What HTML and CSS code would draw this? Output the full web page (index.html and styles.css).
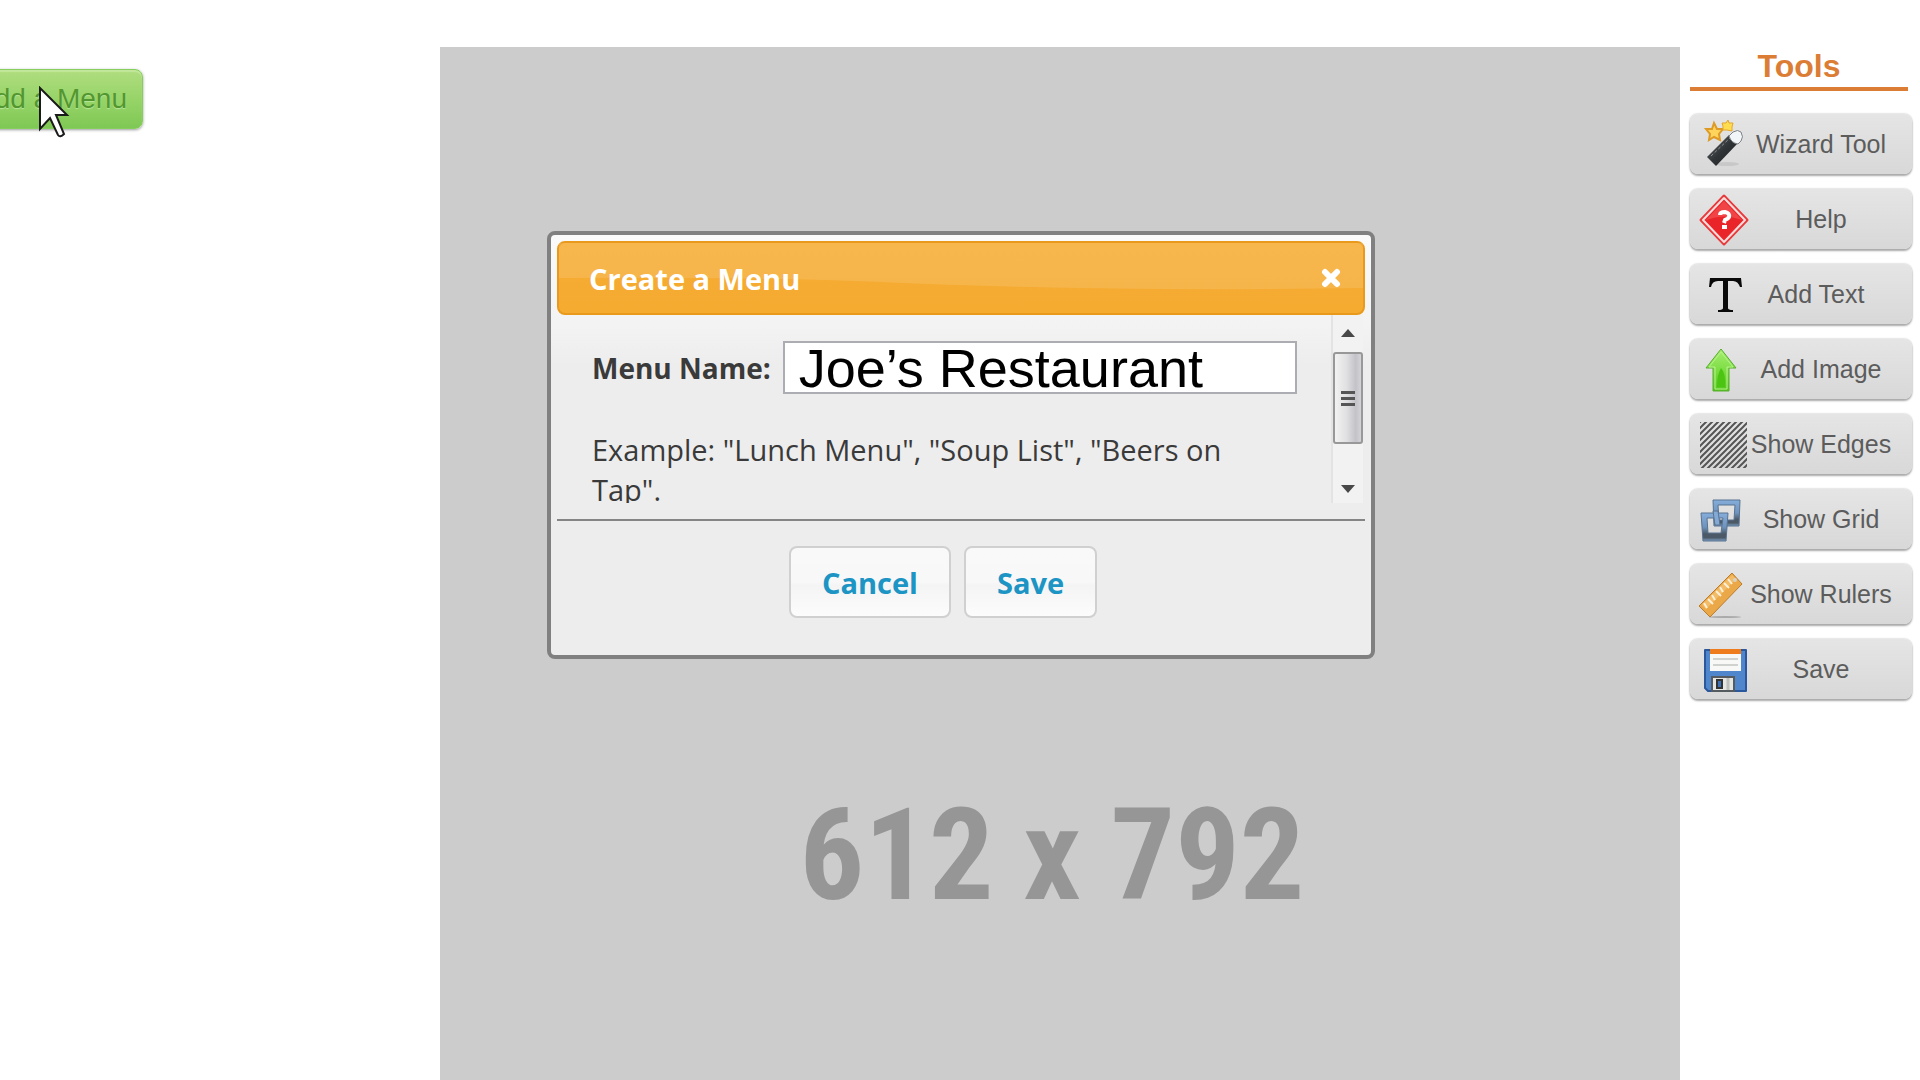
FILE: index.html
```html
<!DOCTYPE html>
<html lang="en">
<head>
<meta charset="utf-8">
<title>Menu Editor</title>
<link rel="stylesheet" href="styles.css">
</head>
<body>
<div class="page">
  <aside class="menus">
    <button class="add-menu" type="button">Add a Menu</button>
  </aside>

  <main class="workspace">
    <div class="sheet"><span class="sheet-size">612 x 792</span></div>
  </main>

  <aside class="tools">
    <h2 class="tools-title">Tools</h2>
    <button class="tool" type="button">
      <svg class="tool-icon" viewBox="0 0 52 60" aria-hidden="true">
        <defs>
          <linearGradient id="wand" x1="0" y1="0" x2="1" y2="1"><stop offset="0" stop-color="#6a6e70"/><stop offset=".5" stop-color="#303436"/><stop offset="1" stop-color="#1c1e20"/></linearGradient>
        </defs>
        <ellipse cx="37" cy="50" rx="12" ry="2" fill="#c8c8c8"/>
        <path d="M17 43 L39 21 L48 29 L26 52 Z" fill="url(#wand)"/>
        <path d="M21 42 L40 24" stroke="#8b8f90" stroke-width="1" stroke-dasharray="3 2"/>
        <path d="M39 22 L43 18 Q48 15 51 18 Q54 23 51 27 L48 30 Q41 29 39 22Z" fill="#f2f6f8" stroke="#7d8285" stroke-width="1"/>
        <path d="M24 9 L27 15 L33 15 L29 20 L30 26 L24 23 L19 26 L20 20 L16 15 L22 15Z" fill="#ffd45c" stroke="#dd9a24" stroke-width="2"/>
        <path d="M38 6 L39 9 L43 9 L42 13 L42 17 L37 16 L33 16 L33 12 L32 9 L36 9Z" fill="#ffdc50" stroke="#e5a62c" stroke-width="1"/>
      </svg>
      <span>Wizard Tool</span>
    </button>
    <button class="tool" type="button">
      <svg class="tool-icon" viewBox="0 0 52 60" aria-hidden="true">
        <path d="M34 7 L57 31 L34 55 L11 31Z" fill="#e8393b" stroke="#e8393b" stroke-width="3" stroke-linejoin="round"/>
        <path d="M34 9 L55 31 L34 53 L13 31Z" fill="#ea2529" stroke="#fbdcdc" stroke-width="2" stroke-linejoin="round"/>
        <path d="M34 12 L52 31 Q34 24 16 31Z" fill="#f35a5b" opacity=".6"/>
        <path d="M30 26 Q30 23 35 23 Q40 24 39 28 Q38 30 35 31 L34 34" fill="none" stroke="#fff" stroke-width="4"/>
        <rect x="32" y="36" width="5" height="4" fill="#fff"/>
      </svg>
      <span>Help</span>
    </button>
    <button class="tool tool-text" type="button">
      <svg class="tool-icon" viewBox="0 0 52 60" aria-hidden="true">
        <path d="M20 14 H51 L52 23 H50 Q48 17 43 17 H38 V44 Q38 46 43 46 V48 H28 V46 Q33 46 33 44 V17 H28 Q22 17 21 23 H19Z" fill="#0a0a0a"/>
      </svg>
      <span>Add Text</span>
    </button>
    <button class="tool" type="button">
      <svg class="tool-icon" viewBox="0 0 52 60" aria-hidden="true">
        <defs><linearGradient id="up" x1="0" y1="0" x2="0" y2="1"><stop offset="0" stop-color="#a6ee70"/><stop offset=".5" stop-color="#7ddd45"/><stop offset="1" stop-color="#52c61a"/></linearGradient></defs>
        <path d="M31 10 L46 29 H39 V52 H23 V29 H16Z" fill="url(#up)" stroke="#58ad2d" stroke-width="1" stroke-linejoin="round"/>
        <path d="M31 13 L43 28 H37 V50 H25 V28 H19Z" fill="none" stroke="#b9f38d" stroke-width="1"/>
        <path d="M31 29 Q36 34 35 48 H27 Q27 35 31 29Z" fill="#4cc512"/>
      </svg>
      <span>Add Image</span>
    </button>
    <button class="tool" type="button">
      <svg class="tool-icon" viewBox="0 0 52 60" aria-hidden="true">
        <defs><pattern id="hatch" width="6" height="6" patternUnits="userSpaceOnUse"><path d="M-1 7 L7 -1 M-1 1 L1 -1 M5 7 L7 5" stroke="#555" stroke-width="2"/></pattern></defs>
        <rect x="10" y="8" width="47" height="46" fill="url(#hatch)"/>
      </svg>
      <span>Show Edges</span>
    </button>
    <button class="tool" type="button">
      <svg class="tool-icon" viewBox="0 0 52 60" aria-hidden="true">
        <defs>
          <linearGradient id="sq" x1="0" y1="0" x2="0" y2="1"><stop offset="0" stop-color="#86aedb"/><stop offset=".5" stop-color="#6e93bd"/><stop offset=".75" stop-color="#4c5966"/><stop offset=".88" stop-color="#4c5966"/><stop offset="1" stop-color="#7e9fc2"/></linearGradient>
        </defs>
        <g fill-rule="evenodd" stroke="#587391" stroke-width="1">
          <path d="M23 11 H50 L49 37 H24Z M28 16 L29 31 H44 L45 16Z" fill="url(#sq)"/>
          <path d="M11 24 H38 L36 52 H13Z M17 29 L18 44 H31 L33 29Z" fill="url(#sq)"/>
          <path d="M23 22 H28 L30 36 H25Z" fill="#83a9d4"/>
        </g>
      </svg>
      <span>Show Grid</span>
    </button>
    <button class="tool" type="button">
      <svg class="tool-icon" viewBox="0 0 52 60" aria-hidden="true">
        <ellipse cx="35" cy="53" rx="16" ry="1" fill="#aaa"/>
        <path d="M42 9 L52 20 L20 53 L9 42Z" fill="#eba848" stroke="#bd7b28" stroke-width="1" stroke-linejoin="round"/>
        <path d="M12 41 L42 11 L46 15 L16 45Z" fill="#f3bc68"/>
        <path d="M14 39 l3 5 M18 35 l5 5 M22 31 l3 5 M26 27 l5 5 M30 23 l3 5 M34 19 l5 5 M38 15 l4 5" stroke="#fdf0d6" stroke-width="2"/>
        <circle cx="45" cy="16" r="2" fill="#d9d3c4"/>
      </svg>
      <span>Show Rulers</span>
    </button>
    <button class="tool" type="button">
      <svg class="tool-icon" viewBox="0 0 52 60" aria-hidden="true">
        <path d="M15 11 H56 V52 H18 L15 49Z" fill="#4f86cc" stroke="#2b579c" stroke-width="2" stroke-linejoin="round"/>
        <rect x="20" y="10" width="31" height="5" fill="#ee7c1c"/>
        <rect x="20" y="15" width="31" height="17" fill="#f8f8f6"/>
        <path d="M23 20 H48 M23 26 H48" stroke="#cfd2cf" stroke-width="2"/>
        <rect x="22" y="38" width="22" height="14" fill="#e6e6e2" stroke="#565b5f" stroke-width="2"/>
        <rect x="27" y="41" width="5" height="8" fill="#3d6fb5" stroke="#333" stroke-width="2"/>
        <path d="M38 39 V51" stroke="#bfc0bd" stroke-width="3"/>
      </svg>
      <span>Save</span>
    </button>
  </aside>
</div>

<div class="overlay">
  <section class="dialog" role="dialog" aria-labelledby="dialog-title">
    <header class="dialog-bar">
      <svg class="dialog-gloss" viewBox="0 0 800 70" preserveAspectRatio="none" aria-hidden="true"><path d="M0 0 H800 V45 Q540 49 320 39 Q200 34 0 35Z" fill="#fff" fill-opacity=".12"/></svg>
      <h1 class="dialog-title" id="dialog-title">Create a Menu</h1>
      <button class="close" type="button" aria-label="Close">
        <svg class="close-icon" viewBox="0 0 20 20" aria-hidden="true"><path d="M4 4 L16 16 M16 4 L4 16" stroke="#fff" stroke-width="6" stroke-linecap="round"/></svg>
      </button>
    </header>
    <div class="dialog-body">
      <div class="dialog-content">
        <div class="field">
          <label class="field-label" for="menu-name">Menu Name:</label>
          <input class="field-input" id="menu-name" type="text" value="Joe’s Restaurant">
        </div>
        <p class="example">Example: "Lunch Menu", "Soup List", "Beers on Tap".</p>
      </div>
      <div class="scrollbar" aria-hidden="true">
        <svg class="arrow" viewBox="0 0 14 8"><path d="M7 0 L14 8 H0Z" fill="#484848"/></svg>
        <div class="thumb"><i class="grip"></i><i class="grip"></i><i class="grip"></i></div>
        <svg class="arrow arrow-down" viewBox="0 0 14 8"><path d="M0 0 H14 L7 8Z" fill="#484848"/></svg>
      </div>
    </div>
    <footer class="dialog-actions">
      <button class="action" type="button">Cancel</button>
      <button class="action" type="button">Save</button>
    </footer>
  </section>
</div>

<svg class="cursor" viewBox="0 0 32 54" aria-hidden="true"><path d="M2 2 V43 L12 32 L20 49 Q22 52 26 48 L18 29 H29Z" fill="#fff" stroke="#1a1a1a" stroke-width="2"/></svg>
</body>
</html>
```

FILE: styles.css
```css
* { box-sizing: border-box; }

body {
  margin: 0;
  height: 100vh;
  overflow: hidden;
  position: relative;
  background: #fff;
  font-family: "Liberation Sans", Arial, sans-serif;
}

button { font-family: inherit; cursor: pointer; }

.page {
  display: grid;
  grid-template-columns: 440px 1fr 240px;
  align-items: start;
}

/* Left column */
.menus { padding-top: 69px; }

.add-menu {
  height: 60px;
  margin-left: -41px;
  padding: 0 15px 0 16px;
  border: 1px solid #86cf5c;
  border-radius: 8px;
  background: linear-gradient(#b0dd80, #97d468 50%, #7fc855);
  box-shadow: 0 1px 3px #999, inset 0 2px 1px #c2e79c;
  color: #52962f;
  font-size: 28px;
  text-shadow: 0 1px 1px #b9e59a;
}

/* Sheet being edited */
.workspace { padding-top: 47px; }

.sheet {
  display: flex;
  align-items: center;
  justify-content: center;
  padding: 12px 16px 0 0;
  aspect-ratio: 612 / 792;
  background: #ccc;
}

.sheet-size {
  color: #969696;
  font-family: "Roboto Condensed", "Arial Narrow", sans-serif;
  font-size: 128px;
  font-weight: bold;
  line-height: 1;
  white-space: nowrap;
}

/* Tools column */
.tools {
  display: flex;
  flex-direction: column;
  gap: 15px;
  padding: 46px 8px 0 10px;
}

.tools-title {
  margin: 0 4px 8px 0;
  padding-bottom: 1px;
  border-bottom: 4px solid #dc7d36;
  color: #dc7d36;
  font-size: 32px;
  line-height: 40px;
  text-align: center;
}

.tool {
  display: grid;
  grid-template-columns: 52px 1fr;
  align-items: center;
  height: 60px;
  padding: 0 12px 0 0;
  border: 0;
  border-radius: 8px;
  background: linear-gradient(#e5e5e5, #d8d8d8);
  box-shadow: 0 2px 2px #aaa, 0 0 2px #aaa;
  color: #5c5c5c;
  font-size: 25px;
  text-align: center;
  white-space: nowrap;
}

.tool-text { padding-right: 22px; }

.tool-icon { display: block; width: 52px; height: 60px; overflow: visible; }

/* Dialog */
.overlay {
  position: absolute;
  inset: 0;
  display: flex;
  align-items: flex-start;
  justify-content: center;
  padding: 231px 0 0 2px;
}

.dialog {
  width: 828px;
  padding: 6px;
  border: 4px solid #808080;
  border-radius: 8px;
  background: linear-gradient(#fafafa, #f3f3f3 90px, #ededed 130px);
  color: #3a3a3a;
  font-family: "Trebuchet MS", "Open Sans", sans-serif;
}

.dialog-bar {
  position: relative;
  display: flex;
  align-items: center;
  justify-content: space-between;
  height: 74px;
  padding: 0 22px 0 30px;
  border: 2px solid #e99a1c;
  border-radius: 8px;
  background: linear-gradient(#f6ad35, #f5aa30);
}

.dialog-gloss {
  position: absolute;
  inset: 0;
  width: 100%;
  height: 100%;
}

.dialog-title {
  position: relative;
  margin: 0;
  color: #fff;
  font-size: 29px;
  font-weight: bold;
}

.close {
  position: relative;
  padding: 0;
  border: 0;
  background: none;
}

.close-icon { display: block; width: 20px; height: 20px; }

.dialog-body {
  display: flex;
  height: 188px;
  padding-right: 2px;
  overflow: hidden;
}

.dialog-content {
  flex: 1;
  min-width: 0;
  padding: 26px 34px 0 35px;
}

.field { display: flex; align-items: center; gap: 12px; }

.field-label { font-size: 28px; font-weight: bold; white-space: nowrap; }

.field-input {
  flex: 1;
  min-width: 0;
  height: 53px;
  padding: 0 14px;
  border: 2px solid #abadb3;
  background: #fff;
  color: #000;
  font-family: "Liberation Sans", Arial, sans-serif;
  font-size: 54px;
  line-height: 48px;
}

.example {
  margin: 36px 32px 0 0;
  font-size: 29px;
  line-height: 40px;
}

.scrollbar {
  flex: none;
  display: flex;
  flex-direction: column;
  align-items: center;
  width: 32px;
  padding: 14px 0 10px;
  border-left: 2px solid #e3e3e3;
  background: #f2f2f2;
}

.arrow { flex: none; width: 14px; height: 8px; }

.arrow-down { margin-top: auto; }

.thumb {
  display: flex;
  flex-direction: column;
  align-items: center;
  justify-content: center;
  gap: 3px;
  width: 30px;
  height: 92px;
  margin-top: 15px;
  border: 2px solid #989898;
  border-radius: 3px;
  background: linear-gradient(90deg, #f2f2f2, #e0e0e2 45%, #c2c2c8 80%, #d4d4d8);
}

.grip { width: 14px; height: 3px; background: #555; }

.dialog-actions {
  display: flex;
  justify-content: center;
  gap: 13px;
  height: 130px;
  margin-top: 16px;
  padding: 25px 36px 30px 0;
  border-top: 2px solid #858585;
}

.action {
  height: 72px;
  padding: 0 31px;
  border: 2px solid #d0d0d0;
  border-radius: 8px;
  background: linear-gradient(#f9f9f9, #f8f8f8 50%, #f4f4f4 55%, #fcfcfc);
  color: #1c94c4;
  font-size: 29px;
  font-weight: bold;
}

/* Mouse pointer */
.cursor {
  position: absolute;
  top: 86px;
  left: 38px;
  width: 32px;
  height: 54px;
}
```
